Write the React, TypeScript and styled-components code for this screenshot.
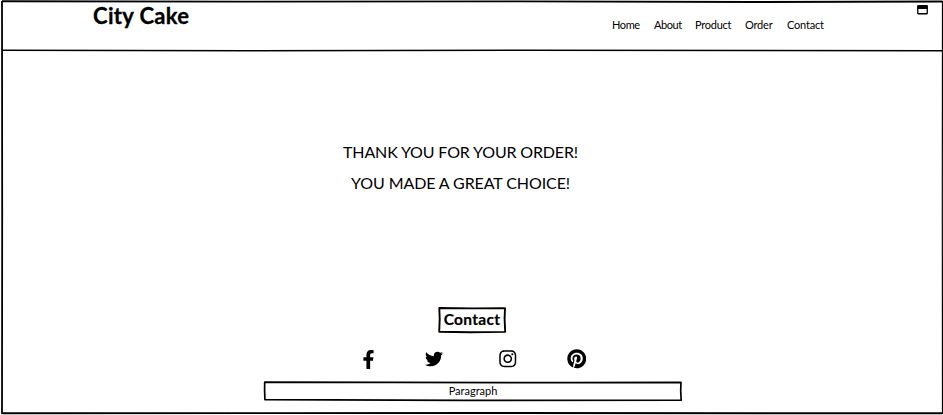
import React from "react";
import styled, { createGlobalStyle } from "styled-components";
import { FaFacebookF, FaTwitter, FaInstagram, FaPinterest } from "react-icons/fa";

const GlobalStyle = createGlobalStyle`
  * { box-sizing: border-box; }
  body { margin: 0; background: #fff; color: #000; font-family: Lato, "Open Sans", sans-serif; overflow: hidden; }
`;

const Page = styled.div`
  position: relative;
  display: flex;
  flex-direction: column;
  width: 943px;
  height: 415px;
  padding: 2px 2px 2px 3px;
`;

const Outline = styled.svg`
  position: absolute;
  inset: 0;
  width: 100%;
  height: 100%;
  overflow: visible;
  pointer-events: none;
  fill: none;
  stroke: #000;
  stroke-linejoin: round;
`;

const Header = styled.header`
  display: flex;
  align-items: flex-start;
  height: 49px;
  padding-left: 90px;
`;

const Brand = styled.h1`
  width: 519px;
  margin: 0;
  font-size: 22px;
  line-height: 28px;
  font-weight: 700;
  letter-spacing: 0.33px;
  -webkit-text-stroke: 0.3px #000;
  white-space: nowrap;
`;

const Nav = styled.nav`
  display: flex;
  width: 305px;
  padding-top: 15px;
`;

const NavLink = styled.a<{ $width: number; $spacing: number }>`
  width: ${(p) => p.$width}px;
  font-size: 11px;
  line-height: 16px;
  letter-spacing: ${(p) => p.$spacing}px;
  color: #000;
  text-decoration: none;
  white-space: nowrap;
`;

const WindowIcon = styled.svg`
  width: 11px;
  height: 10px;
  margin-top: 3px;
`;

const Message = styled.main`
  display: flex;
  flex-direction: column;
  align-items: center;
  width: 915px;
  height: 255px;
  padding-top: 85px;
`;

const MessageLine = styled.p<{ $spacing: number }>`
  margin: 0;
  font-size: 16px;
  line-height: 31px;
  letter-spacing: ${(p) => p.$spacing}px;
  white-space: nowrap;
`;

const Footer = styled.footer`
  display: flex;
  flex-direction: column;
  align-items: flex-start;
`;

const ContactButton = styled.button`
  position: relative;
  width: 68px;
  height: 26px;
  margin-left: 435px;
  padding: 0;
  border: 0;
  background: transparent;
  color: #000;
  font: 700 15.5px/24px Lato, "Open Sans", sans-serif;
  letter-spacing: 0.3px;
  -webkit-text-stroke: 0.2px #000;
`;

const Socials = styled.div`
  display: flex;
  align-items: center;
  height: 20px;
  margin: 17px 0 0 355px;
`;

const SocialLink = styled.a<{ $width: number; $size: number }>`
  display: flex;
  justify-content: center;
  width: ${(p) => p.$width}px;
  color: #000;
  font-size: ${(p) => p.$size}px;
`;

const Caption = styled.p`
  position: relative;
  width: 418px;
  height: 20px;
  margin: 12px 0 0 261px;
  font-size: 11px;
  line-height: 20px;
  text-align: center;
`;

export default function App() {
  return (
    <>
      <GlobalStyle />
      <Page>
        <Outline viewBox="0 0 943 415">
          <path d="M2 1.2 L240 1.6 L520 1.4 L755 2 L942.5 1.5" strokeWidth="1.9" />
          <path d="M2 1 L2.2 210 L2 414" strokeWidth="1.8" />
          <path d="M942.5 1 L942.3 200 L942.5 414" strokeWidth="1.2" />
          <path d="M2 50.2 L250 50.8 L520 50.3 L942 50.7" strokeWidth="1.6" />
          <path d="M2 413.2 L480 413 L942 413.3" strokeWidth="1.9" />
        </Outline>
        <Header>
          <Brand>City Cake</Brand>
          <Nav>
            <NavLink href="#" $width={42} $spacing={-0.4}>Home</NavLink>
            <NavLink href="#" $width={41} $spacing={-0.45}>About</NavLink>
            <NavLink href="#" $width={50} $spacing={-0.25}>Product</NavLink>
            <NavLink href="#" $width={42} $spacing={-0.2}>Order</NavLink>
            <NavLink href="#" $width={60} $spacing={-0.2}>Contact</NavLink>
          </Nav>
          <WindowIcon viewBox="0 0 11 10">
            <rect x="0.75" y="0.75" width="9.5" height="8" rx="0.6" fill="#fff" stroke="#000" strokeWidth="1.3" />
            <path d="M0.5 0.5h10v3.5h-10z" />
          </WindowIcon>
        </Header>
        <Message>
          <MessageLine $spacing={-0.15}>THANK YOU FOR YOUR ORDER!</MessageLine>
          <MessageLine $spacing={-0.09}>YOU MADE A GREAT CHOICE!</MessageLine>
        </Message>
        <Footer>
          <ContactButton>
            <Outline viewBox="0 0 68 26">
              <path d="M1.3 2 L35 2.4 L67 2.2 L66.6 13 L67.2 25.9 L32 26.3 L1.2 25.8 L1.7 13 Z" strokeWidth="1.9" />
            </Outline>
            Contact
          </ContactButton>
          <Socials>
            <SocialLink href="#" $width={20} $size={19}><FaFacebookF /></SocialLink>
            <SocialLink href="#" $width={112} $size={18}><FaTwitter /></SocialLink>
            <SocialLink href="#" $width={36} $size={19.5}><FaInstagram /></SocialLink>
            <SocialLink href="#" $width={101} $size={19.5}><FaPinterest /></SocialLink>
          </Socials>
          <Caption>
            <Outline viewBox="0 0 418 20">
              <path d="M0.7 1.2 L130 1.3 L300 1.7 L417 1.4 L416.7 10 L417.2 19.2 L200 19.3 L0.9 18.6 L0.6 9 Z" strokeWidth="1.7" />
            </Outline>
            Paragraph
          </Caption>
        </Footer>
      </Page>
    </>
  );
}
